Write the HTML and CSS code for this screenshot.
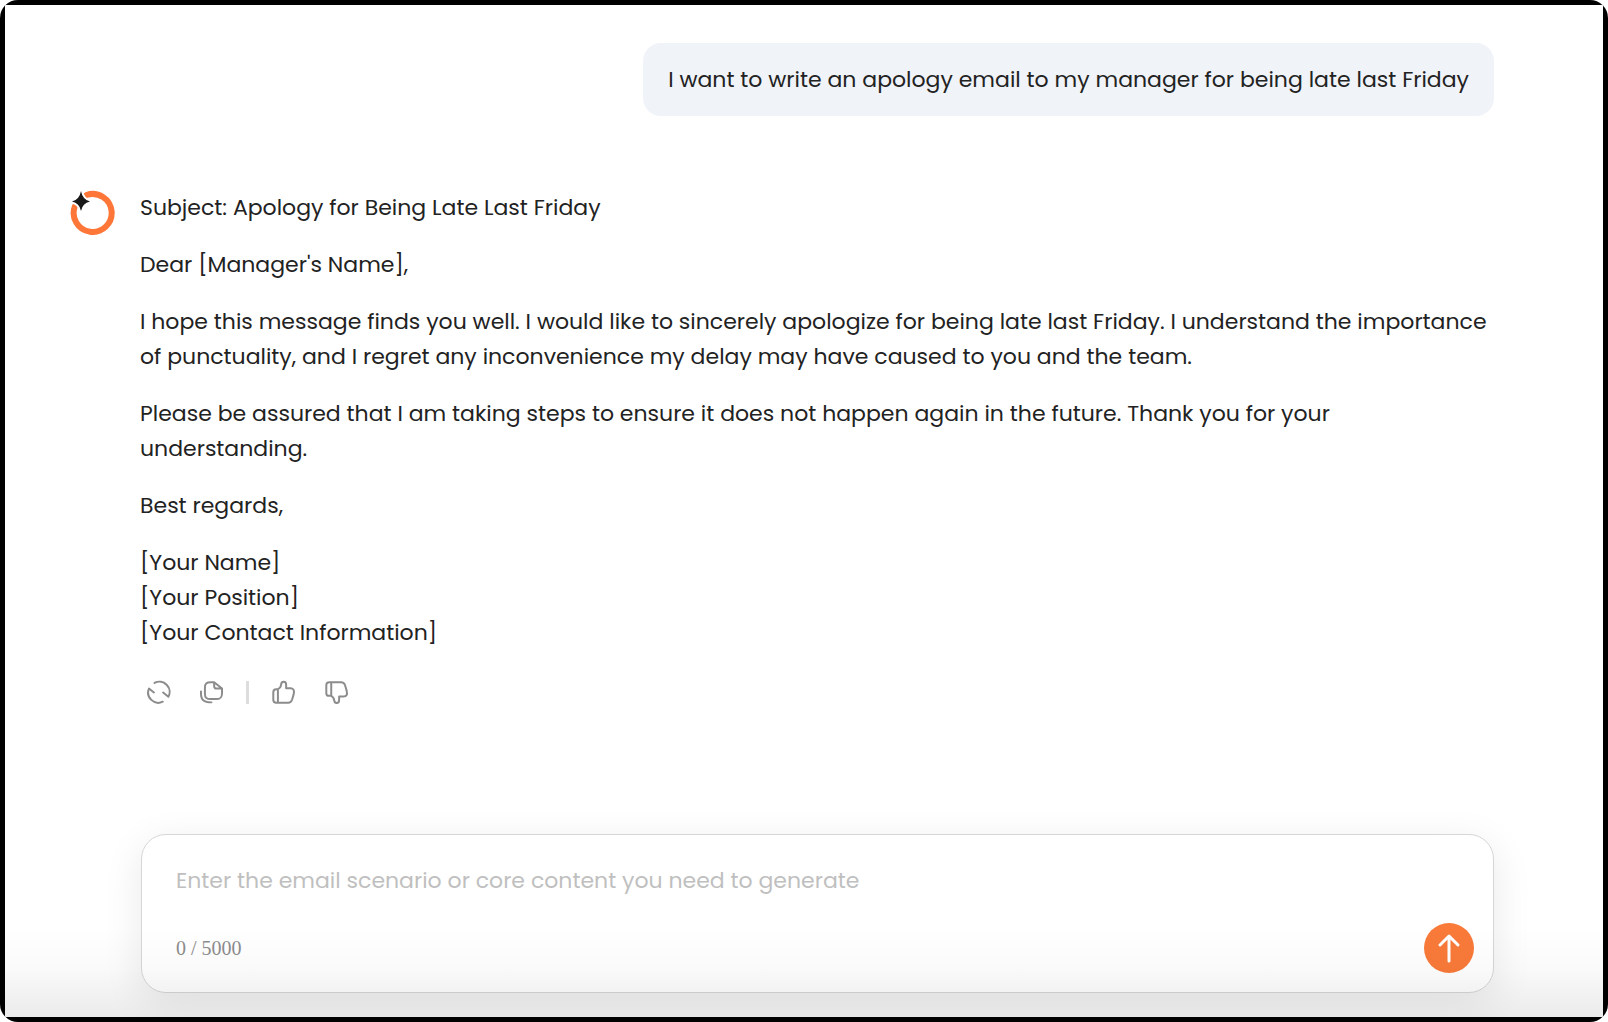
FILE: index.html
```html
<!doctype html>
<html lang="en">
<head>
  <meta charset="utf-8">
  <title>Email Writer</title>
  <meta name="viewport" content="width=device-width,initial-scale=1">
  <link rel="stylesheet" href="styles.css">
</head>
<body>
  <div class="frame">
    <div class="chat">
      <main class="messages">
        <div class="message-user">
          <p class="bubble">I want to write an apology email to my manager for being late last Friday</p>
        </div>

        <div class="message-bot">
          <svg class="avatar" viewBox="0 0 45 45" aria-hidden="true">
            <path d="M16.5 5A19 19 0 1 1 5 16" fill="none" stroke="#ff7738" stroke-width="6" stroke-linecap="round"/>
            <path d="M11 1Q12.500 9.500 20 11.500Q12.500 13 11 21Q9.500 13 2 11.500Q9.500 9.500 11 1Z" fill="#1a1a1a" stroke="#fff" stroke-width="4" paint-order="stroke"/>
          </svg>
          <div class="reply">
            <p>Subject: Apology for Being Late Last Friday</p>
            <p>Dear [Manager's Name],</p>
            <p>I hope this message finds you well. I would like to sincerely apologize for being late last Friday. I understand the importance of punctuality, and I regret any inconvenience my delay may have caused to you and the team.</p>
            <p>Please be assured that I am taking steps to ensure it does not happen again in the future. Thank you for your understanding.</p>
            <p>Best regards,</p>
            <p>[Your Name]<br>[Your Position]<br>[Your Contact Information]</p>

            <div class="actions">
              <button type="button" class="action-btn" aria-label="Regenerate">
                <svg viewBox="50 44 76 76"><path d="M76 53A31 31 0 0 1 118 95L102 82M101 110A31 31 0 0 1 59 70L74 82"/></svg>
              </button>
              <button type="button" class="action-btn" aria-label="Copy">
                <svg viewBox="210 44 76 76"><path d="M256 51H246C232 51 228 55 228 68V84C228 98 232 102 246 102H262C275 102 280 98 280 84V70ZM256 51V62Q256 70 264 70H280M216 79V84C216 104 224 112 248 112"/></svg>
              </button>
              <span class="divider"></span>
              <button type="button" class="action-btn" aria-label="Like">
                <svg viewBox="422 44 76 76"><path d="M443 72H438Q429 72 429 81V104Q429 113 438 113H474Q483 113 486 104L491 87Q495 70 482 69H468V58C468 47 454 47 453 57Q452 68 443 72V113"/></svg>
              </button>
              <button type="button" class="action-btn" aria-label="Dislike">
                <svg viewBox="583 44 76 76"><path d="M605 92H598Q590 92 590 84V60Q590 51 599 51H635Q644 51 647 60L652 77Q656 94 643 94H629V105C629 117 615 117 614 106Q613 96 605 92V51"/></svg>
              </button>
            </div>
          </div>
        </div>
      </main>

      <form class="composer">
        <textarea class="composer-input" rows="1" aria-label="Email scenario" placeholder="Enter the email scenario or core content you need to generate"></textarea>
        <div class="composer-footer">
          <span class="counter">0 / 5000</span>
          <button type="button" class="send-btn" aria-label="Send">
            <svg viewBox="0 0 50 50"><path d="M25 38V14M16 22L25 13L34 22"/></svg>
          </button>
        </div>
      </form>
    </div>
  </div>
</body>
</html>
```
FILE: styles.css
```css
:root {
  --text: #222;
  --muted: #8c8c8c;
  --placeholder: #bfbfbf;
  --border: #d6d6d6;
  --bubble: #f0f3f8;
  --primary: #f97a39;
}

* {
  box-sizing: border-box;
  margin: 0;
}
body {
  font-family: Poppins, Inter, sans-serif;
  font-size: 22px;
  line-height: 35px;
  color: var(--text);
  background: #fff;
}

/* black window frame */
.frame {
  min-height: 100vh;
  padding: 5px;
  display: flex;
  background: #000;
  border-radius: 18px;
  overflow: hidden;
}
.chat {
  flex: 1;
  position: relative;
  overflow: hidden;
  display: flex;
  flex-direction: column;
  padding: 38px 109px 24px 65px;
  background: #fff;
}
/* shade along the bottom edge */
.chat::after {
  content: "";
  position: absolute;
  left: 0;
  right: 0;
  bottom: 0;
  height: 90px;
  background: linear-gradient(rgba(0, 0, 0, 0), rgba(0, 0, 0, .02) 45%, rgba(0, 0, 0, .08));
  pointer-events: none;
}

/* messages */
.messages {
  flex: 1;
}
.message-user {
  display: flex;
  justify-content: flex-end;
}
.bubble {
  padding: 19px 25px;
  background: var(--bubble);
  border-radius: 18px;
}
.message-bot {
  display: flex;
  align-items: flex-start;
  gap: 25px;
  margin-top: 74px;
}
.avatar {
  flex: 0 0 45px;
  height: 45px;
}
.reply {
  flex: 1;
}
.reply p + p {
  margin-top: 22px;
}

/* actions */
.actions {
  display: flex;
  align-items: center;
  gap: 16px;
  margin-top: 24px;
}
.action-btn {
  width: 37px;
  height: 36px;
  padding: 0;
  border: none;
  background: none;
  display: flex;
  align-items: center;
  justify-content: center;
  cursor: pointer;
}
.action-btn svg {
  width: 25px;
  height: 25px;
  fill: none;
  stroke: var(--muted);
  stroke-width: 6;
  stroke-linecap: round;
  stroke-linejoin: round;
}
.divider {
  width: 3px;
  height: 23px;
  background: #ddd;
}

/* composer */
.composer {
  margin-left: 71px;
  padding: 28px 19px 19px 34px;
  border: 1px solid var(--border);
  border-radius: 25px;
  background: #fff;
  box-shadow: 0 10px 40px rgba(0, 0, 0, .09);
}
.composer-input {
  display: block;
  width: 100%;
  padding: 0;
  border: none;
  outline: none;
  resize: none;
  overflow: hidden;
  background: none;
  font: inherit;
  color: inherit;
}
.composer-input::placeholder {
  color: var(--placeholder);
}
.composer-footer {
  display: flex;
  align-items: center;
  justify-content: space-between;
  margin-top: 25px;
}
.counter {
  font-family: "Liberation Serif", "Times New Roman", serif;
  font-size: 20px;
  color: var(--muted);
}
.send-btn {
  width: 50px;
  height: 50px;
  padding: 0;
  border: none;
  border-radius: 50%;
  background: var(--primary);
  cursor: pointer;
}
.send-btn svg {
  display: block;
  fill: none;
  stroke: #fff;
  stroke-width: 3;
  stroke-linecap: round;
  stroke-linejoin: round;
}
```
